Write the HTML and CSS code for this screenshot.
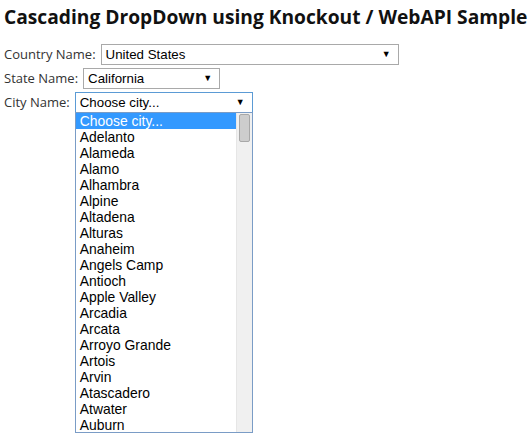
FILE: index.html
```html
<!DOCTYPE html>
<html lang="en">
<head>
  <meta charset="UTF-8">
  <meta name="viewport" content="width=device-width, initial-scale=1.0">
  <title>Cascading DropDown using Knockout / WebAPI Sample</title>
  <link rel="stylesheet" href="styles.css">
</head>
<body>
  <h1>Cascading DropDown using Knockout / WebAPI Sample</h1>

  <div class="row">
    <label>Country Name:</label>
    <div class="select country">United States<span class="arrow">&#9660;</span></div>
  </div>
  <div class="row">
    <label>State Name:</label>
    <div class="select state">California<span class="arrow">&#9660;</span></div>
  </div>
  <div class="row">
    <label>City Name:</label>
    <div class="city-wrap">
      <div class="select city focused">Choose city...<span class="arrow">&#9660;</span></div>
      <div class="dropdown">
        <ul class="options">
          <li class="selected">Choose city...</li>
          <li>Adelanto</li>
          <li>Alameda</li>
          <li>Alamo</li>
          <li>Alhambra</li>
          <li>Alpine</li>
          <li>Altadena</li>
          <li>Alturas</li>
          <li>Anaheim</li>
          <li>Angels Camp</li>
          <li>Antioch</li>
          <li>Apple Valley</li>
          <li>Arcadia</li>
          <li>Arcata</li>
          <li>Arroyo Grande</li>
          <li>Artois</li>
          <li>Arvin</li>
          <li>Atascadero</li>
          <li>Atwater</li>
          <li>Auburn</li>
        </ul>
        <div class="scrollbar"><div class="thumb"></div></div>
      </div>
    </div>
  </div>
</body>
</html>
```

FILE: styles.css
```css
* {
  box-sizing: border-box;
}

body {
  margin: 0;
  padding: 0 4px;
  min-height: 434px;
  font-family: "Open Sans", "DejaVu Sans", sans-serif;
  font-size: 13px;
  color: #222;
  background: #fff;
}

h1 {
  margin: 0;
  padding-top: 3px;
  height: 44px;
  font-size: 19.2px;
  font-weight: 700;
  color: #111;
  white-space: nowrap;
}

.row {
  display: flex;
  align-items: flex-start;
  height: 24px;
}

label {
  margin-right: 5px;
  line-height: 21px;
  color: #333;
}

.select {
  position: relative;
  height: 21px;
  padding-left: 4px;
  border: 1px solid #a9a9a9;
  font-family: "Liberation Sans", Arial, sans-serif;
  font-size: 13.3px;
  line-height: 19px;
  color: #000;
  background: #fff;
}

.arrow {
  position: absolute;
  right: 7px;
  top: 0;
  font-size: 9px;
}

.country {
  width: 298px;
}

.state {
  width: 137px;
}

.city-wrap {
  position: relative;
  width: 178px;
}

.city {
  width: 178px;
}

.focused {
  border-color: #5b9bd5;
}

.dropdown {
  position: absolute;
  left: 0;
  top: 20px;
  width: 178px;
  height: 321px;
  border: 1px solid #7a9cc6;
  background: #fff;
  display: flex;
  font-family: "Liberation Sans", Arial, sans-serif;
  font-size: 13.9px;
  color: #000;
  z-index: 2;
}

.options {
  list-style: none;
  margin: 0;
  padding: 0;
  flex: 1;
}

.options li {
  height: 16px;
  line-height: 16px;
  padding-left: 4px;
}

.options li.selected {
  background: #3399ff;
  color: #fff;
}

.scrollbar {
  width: 16px;
  background: #f0f0f0;
  border-left: 1px solid #e6e6e6;
  padding: 1px 2px;
}

.thumb {
  height: 28px;
  background: #cdcdcd;
  border: 1px solid #a8a8a8;
  border-radius: 2px;
}
```
